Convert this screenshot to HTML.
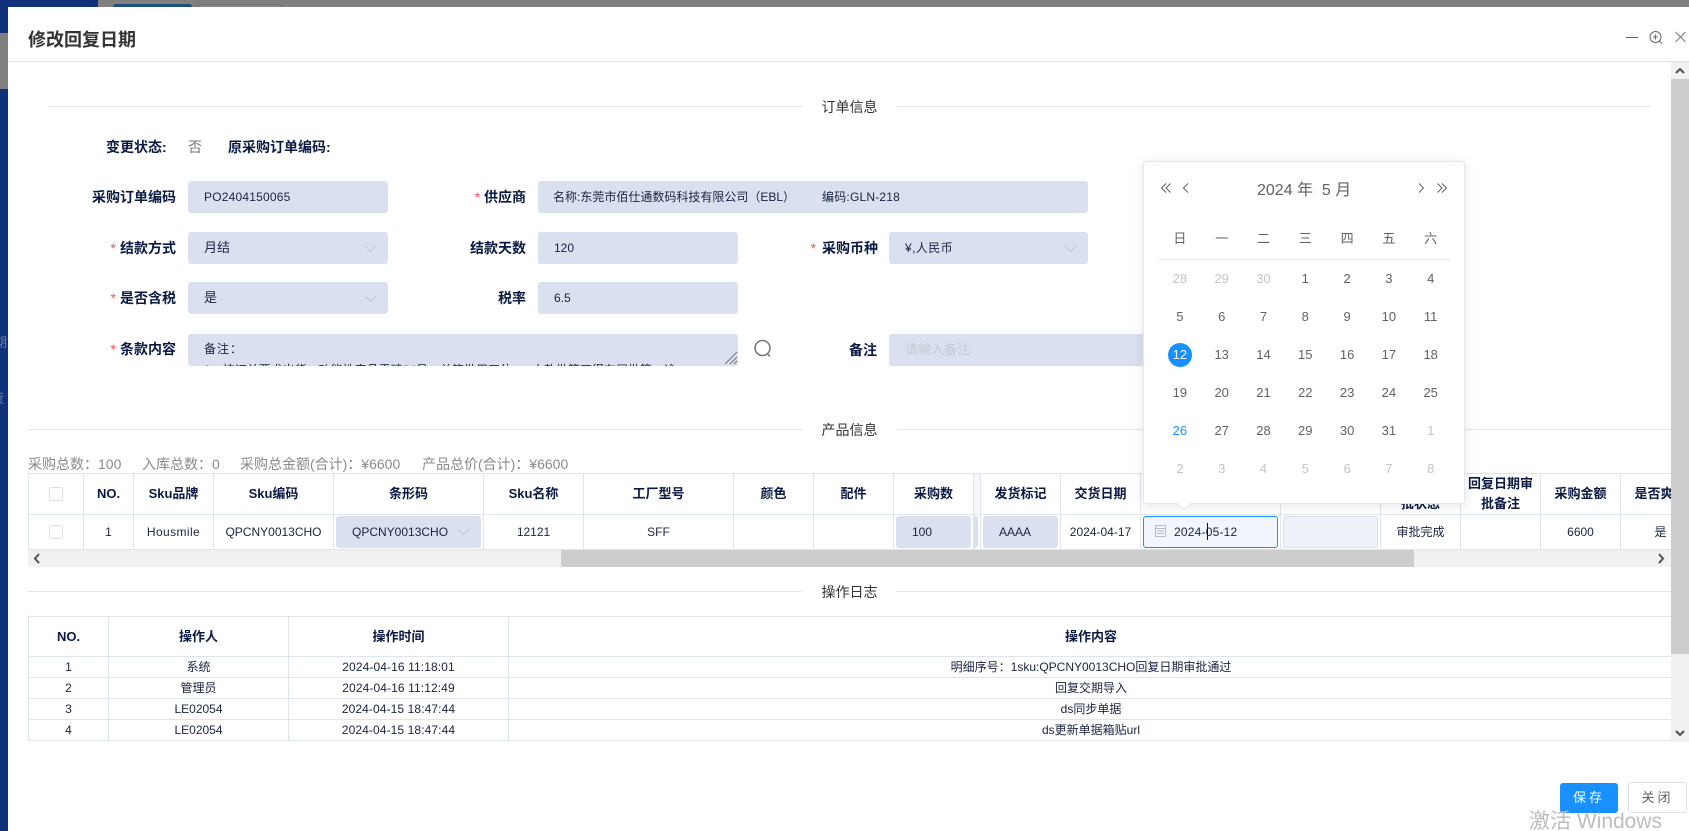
<!DOCTYPE html>
<html><head><meta charset="utf-8"><style>
html,body{margin:0;padding:0;width:1689px;height:831px;overflow:hidden;background:#7f7f7f;}
body{position:relative;font-family:"Liberation Sans","Noto Sans CJK SC",sans-serif;font-size:13px;color:#0b1a44;}
.a{position:absolute;white-space:nowrap;}
.l{position:absolute;white-space:nowrap;font-size:14px;font-weight:bold;line-height:20px;text-align:right;color:#0b1a44;}
.i{position:absolute;background:#dae0ef;border-radius:3px;height:32px;line-height:32px;padding-left:16px;box-sizing:border-box;font-size:13px;color:#1a2340;white-space:nowrap;overflow:hidden;}
.s{color:#ff4d4f;font-weight:normal;margin-right:4px;}
.h{position:absolute;height:1px;background:#dfe4ee;}
.sum{position:absolute;white-space:nowrap;top:454px;font-size:14px;line-height:20px;color:#8a8a8a;}
.sec{position:absolute;left:802px;width:95px;text-align:center;font-size:14px;line-height:20px;color:#333;}
table{border-collapse:collapse;table-layout:fixed;position:absolute;left:0;top:0;}
td,th{border:1px solid #dfe5f0;text-align:center;padding:0;font-size:12px;color:#1a2340;font-weight:normal;box-sizing:border-box;line-height:20px;}
th{font-size:13px;font-weight:bold;color:#0b1a44;}
.cb{position:absolute;width:14px;height:14px;border:1px solid #dcdfe6;border-radius:2px;background:#fff;box-sizing:border-box;}
.cal{position:absolute;left:1143px;top:161px;width:322px;height:343px;background:#fff;border:1px solid #e4e7ed;border-radius:4px;box-shadow:0 2px 12px rgba(0,0,0,.1);box-sizing:border-box;}
.grid{position:absolute;left:15px;display:grid;grid-template-columns:repeat(7,41.8px);grid-auto-rows:38px;text-align:center;font-size:13px;line-height:38px;color:#606266;}
.f{color:#c0c4cc;}
</style></head><body>
<!-- backdrop -->
<div class="a" style="left:0;top:0;width:98px;height:7px;background:#10327a"></div>
<div class="a" style="left:0;top:33px;width:8px;height:56px;background:#808080"></div>
<div class="a" style="left:0;top:0;width:8px;height:33px;background:#10327a"></div>
<div class="a" style="left:0;top:89px;width:8px;height:742px;background:#10327a"></div>
<div class="a" style="left:0;top:335px;width:8px;height:16px;overflow:hidden;color:#6d7fa8;font-size:13px;line-height:16px"><span style="margin-left:-6px">期</span></div>
<div class="a" style="left:0;top:391px;width:8px;height:16px;overflow:hidden;color:#6d7fa8;font-size:13px;line-height:16px"><span style="margin-left:-9px">货</span></div>
<div class="a" style="left:113px;top:4px;width:79px;height:3px;background:#1f4e80;border-radius:3px 3px 0 0"></div>
<div class="a" style="left:197px;top:4px;width:85px;height:3px;background:#858585;border:1px solid #6f6f6f;border-bottom:0;box-sizing:border-box;border-radius:3px 3px 0 0"></div>
<!-- modal -->
<div class="a" style="left:8px;top:7px;width:1681px;height:824px;background:#fff"></div>
<div class="a" style="left:28px;top:28px;font-size:18px;font-weight:bold;line-height:25px;color:#333">修改回复日期</div>
<div class="h" style="left:8px;top:61px;width:1681px;background:#dde4ee"></div>
<svg class="a" style="left:1620px;top:26px" width="69" height="24" fill="none" stroke="#666" stroke-width="1"><path d="M6 11.5h12"/><circle cx="35.5" cy="11" r="5.5"/><path d="M39.5 15l2.5 2.5M33 11h5M35.5 8.5v5"/><path d="M55.5 6l10 10M65.5 6l-10 10" stroke="#777"/></svg>
<!-- vertical scrollbar -->
<div class="a" style="left:1671px;top:62px;width:18px;height:680px;background:#f1f1f1"></div>
<div class="a" style="left:1671px;top:79px;width:18px;height:575px;background:#cdcdcd"></div>
<svg class="a" style="left:1671px;top:62px" width="18" height="17" fill="none" stroke="#505050" stroke-width="2"><path d="M5 11l4-4 4 4"/></svg>
<svg class="a" style="left:1671px;top:725px" width="18" height="17" fill="none" stroke="#505050" stroke-width="2"><path d="M5 6l4 4 4-4"/></svg>
<!-- section 1 -->
<div class="h" style="left:48px;top:106px;width:754px"></div>
<div class="h" style="left:897px;top:106px;width:753px"></div>
<div class="sec" style="top:97px">订单信息</div>
<div class="l" style="left:106px;top:137px">变更状态:</div>
<div class="a" style="left:188px;top:137px;font-size:14px;line-height:20px;color:#777">否</div>
<div class="l" style="left:228px;top:137px">原采购订单编码:</div>
<div class="l" style="right:1513px;top:187px">采购订单编码</div>
<div class="i" style="left:188px;top:181px;width:200px;letter-spacing:.2px;font-size:12px">PO2404150065</div>
<div class="l" style="right:1163px;top:187px"><span class="s">*</span>供应商</div>
<div class="i" style="left:538px;top:181px;width:550px;font-size:12px;padding-left:15px">名称:东莞市佰仕通数码科技有限公司（EBL）<span style="margin-left:27px;letter-spacing:.2px">编码:GLN-218</span></div>
<div class="l" style="right:1513px;top:238px"><span class="s">*</span>结款方式</div>
<div class="i" style="left:188px;top:232px;width:200px">月结</div>
<svg class="a" style="left:364px;top:245px" width="13" height="8" fill="none" stroke="#c0c6d4"><path d="M1 1l5.500 5.500L12 1"/></svg>
<div class="l" style="right:1163px;top:238px">结款天数</div>
<div class="i" style="left:538px;top:232px;width:200px;font-size:12px">120</div>
<div class="l" style="right:811px;top:238px"><span class="s" style="margin-right:6px">*</span>采购币种</div>
<div class="i" style="left:889px;top:232px;width:199px;font-size:12px;letter-spacing:.4px">¥,人民币</div>
<svg class="a" style="left:1064px;top:245px" width="13" height="8" fill="none" stroke="#c0c6d4"><path d="M1 1l5.500 5.500L12 1"/></svg>
<div class="l" style="right:1513px;top:288px"><span class="s">*</span>是否含税</div>
<div class="i" style="left:188px;top:282px;width:200px">是</div>
<svg class="a" style="left:364px;top:295px" width="13" height="8" fill="none" stroke="#c0c6d4"><path d="M1 1l5.500 5.500L12 1"/></svg>
<div class="l" style="right:1163px;top:288px">税率</div>
<div class="i" style="left:538px;top:282px;width:200px;font-size:12px">6.5</div>
<div class="l" style="right:1513px;top:339px"><span class="s">*</span>条款内容</div>
<div class="i" style="left:188px;top:334px;width:550px;height:32px;font-size:12px;line-height:21px;padding-top:5px;white-space:normal"><span style="letter-spacing:1px">备注：</span><br>1、按订单要求出货，功能性产品需晴24号，单笔批用工位......方款批算工得在展批等，逾</div>
<svg class="a" style="left:724px;top:350px" width="14" height="16" fill="none" stroke="#777"><path d="M1 14L13 2M6 14l7-7M10 14l3-3"/></svg>
<svg class="a" style="left:753px;top:339px" width="20" height="20" fill="none" stroke="#777" stroke-width="1.500"><circle cx="9.500" cy="9" r="7.500"/><path d="M14.500 15l2.500 2.500"/></svg>
<div class="l" style="left:849px;top:340px">备注</div>
<div class="i" style="left:889px;top:334px;width:300px;color:#c6cad6;font-size:13px">请输入备注</div>
<!-- section 2 -->
<div class="h" style="left:28px;top:429px;width:774px"></div>
<div class="h" style="left:897px;top:429px;width:774px"></div>
<div class="sec" style="top:420px">产品信息</div>
<div class="sum" style="left:28px">采购总数：100</div>
<div class="sum" style="left:142px">入库总数：0</div>
<div class="sum" style="left:240px">采购总金额(合计)：¥6600</div>
<div class="sum" style="left:422px">产品总价(合计)：¥6600</div>
<div class="a" style="left:28px;top:473px;width:1643px;height:77px;overflow:hidden">
<table style="width:1672px"><colgroup><col style="width:55px"><col style="width:50px"><col style="width:80px"><col style="width:120px"><col style="width:150px"><col style="width:100px"><col style="width:150px"><col style="width:80px"><col style="width:80px"><col style="width:80px"><col style="width:7px"><col style="width:80px"><col style="width:80px"><col style="width:140px"><col style="width:100px"><col style="width:80px"><col style="width:80px"><col style="width:80px"><col style="width:80px"></colgroup>
<tr style="height:41px"><th></th><th>NO.</th><th>Sku品牌</th><th>Sku编码</th><th>条形码</th><th>Sku名称</th><th>工厂型号</th><th>颜色</th><th>配件</th><th>采购数</th><th style="background:#f6f7fa"></th><th>发货标记</th><th>交货日期</th><th>回复日期</th><th></th><th>回复日期审<br>批状态</th><th>回复日期审<br>批备注</th><th>采购金额</th><th>是否爽约</th></tr>
<tr style="height:35px"><td></td><td>1</td><td style="letter-spacing:.4px">Housmile</td><td>QPCNY0013CHO</td><td></td><td>12121</td><td>SFF</td><td></td><td></td><td></td><td></td><td></td><td>2024-04-17</td><td></td><td></td><td>审批完成</td><td></td><td>6600</td><td>是</td></tr>
</table></div>
<div class="cb" style="left:49px;top:487px"></div>
<div class="cb" style="left:49px;top:525px"></div>
<div class="i" style="left:336px;top:516px;width:145px;font-size:12px">QPCNY0013CHO</div>
<svg class="a" style="left:457px;top:528px" width="13" height="8" fill="none" stroke="#c0c6d4"><path d="M1 1l5.500 5.500L12 1"/></svg>
<div class="i" style="left:896px;top:516px;width:75px;font-size:12px">100</div>
<div class="a" style="left:973px;top:516px;width:5px;height:32px;background:#dae0ef;border-radius:0 3px 3px 0"></div>
<div class="i" style="left:983px;top:516px;width:75px;font-size:12px">AAAA</div>
<!-- h scroll -->
<div class="a" style="left:28px;top:550px;width:1643px;height:17px;background:#f1f1f1"></div>
<div class="a" style="left:561px;top:550px;width:853px;height:17px;background:#cdcdcd"></div>
<svg class="a" style="left:29px;top:550px" width="17" height="17" fill="none" stroke="#505050" stroke-width="2"><path d="M10 4l-4 4.500 4 4.500"/></svg>
<svg class="a" style="left:1652px;top:550px" width="17" height="17" fill="none" stroke="#505050" stroke-width="2"><path d="M7 4l4 4.500-4 4.500"/></svg>
<!-- section 3 -->
<div class="h" style="left:28px;top:591px;width:774px"></div>
<div class="h" style="left:897px;top:591px;width:774px"></div>
<div class="sec" style="top:582px">操作日志</div>
<div class="a" style="left:28px;top:616px;width:1643px;height:126px;overflow:hidden">
<table style="width:1645px"><colgroup><col style="width:80px"><col style="width:180px"><col style="width:220px"><col style="width:1165px"></colgroup>
<tr style="height:40px"><th>NO.</th><th>操作人</th><th>操作时间</th><th>操作内容</th></tr>
<tr style="height:21px"><td>1</td><td>系统</td><td style="letter-spacing:.1px">2024-04-16 11:18:01</td><td>明细序号：1sku:QPCNY0013CHO回复日期审批通过</td></tr>
<tr style="height:21px"><td>2</td><td>管理员</td><td style="letter-spacing:.1px">2024-04-16 11:12:49</td><td>回复交期导入</td></tr>
<tr style="height:21px"><td>3</td><td>LE02054</td><td style="letter-spacing:.1px">2024-04-15 18:47:44</td><td>ds同步单据</td></tr>
<tr style="height:21px"><td>4</td><td>LE02054</td><td style="letter-spacing:.1px">2024-04-15 18:47:44</td><td>ds更新单据箱贴url</td></tr>
</table></div>
<!-- date inputs -->
<div class="a" style="left:1143px;top:516px;width:135px;height:32px;background:#f2f5fb;border:1px solid #1890ff;border-radius:3px;box-sizing:border-box"></div>
<svg class="a" style="left:1154px;top:524px" width="13" height="14" fill="none" stroke="#b8bcc6"><rect x="1.500" y="1.500" width="10" height="11"/><path d="M1.500 4.500h10M3 7h7M3 9.500h7"/></svg>
<div class="a" style="left:1174px;top:522px;font-size:12px;line-height:20px;color:#1a2340;letter-spacing:.2px">2024-05-12</div>
<div class="a" style="left:1207px;top:523px;width:1px;height:17px;background:#111"></div>
<div class="a" style="left:1283px;top:516px;width:95px;height:32px;background:#eef1f8;border:1px solid #d8deec;border-radius:3px;box-sizing:border-box"></div>
<!-- calendar -->
<div class="cal">
<svg class="a" style="left:16px;top:19px" width="12" height="14" fill="none" stroke="#606266"><path d="M6 2.500L1.500 7 6 11.500M10.500 2.500L6 7l4.500 4.500"/></svg>
<svg class="a" style="left:37px;top:19px" width="10" height="14" fill="none" stroke="#606266"><path d="M7 2.500L2.500 7 7 11.500"/></svg>
<div class="a" style="left:113px;top:18px;font-size:16px;line-height:22px;color:#606266">2024 年&nbsp; 5 月</div>
<svg class="a" style="left:272px;top:19px" width="10" height="14" fill="none" stroke="#606266"><path d="M3 2.500L7.500 7 3 11.500"/></svg>
<svg class="a" style="left:292px;top:19px" width="12" height="14" fill="none" stroke="#606266"><path d="M1.500 2.500L6 7l-4.500 4.500M6 2.500L10.500 7 6 11.500"/></svg>
<div class="grid" style="top:58px;grid-auto-rows:38px;font-size:13px"><span>日</span><span>一</span><span>二</span><span>三</span><span>四</span><span>五</span><span>六</span></div>
<div class="h" style="left:15px;top:97px;width:292px;background:#e4e7ed"></div>
<div class="a" style="left:24px;top:181px;width:24px;height:24px;border-radius:50%;background:#1890ff"></div>
<div class="grid" style="top:98px">
<span class="f">28</span><span class="f">29</span><span class="f">30</span><span>1</span><span>2</span><span>3</span><span>4</span>
<span>5</span><span>6</span><span>7</span><span>8</span><span>9</span><span>10</span><span>11</span>
<span style="color:#fff">12</span><span>13</span><span>14</span><span>15</span><span>16</span><span>17</span><span>18</span>
<span>19</span><span>20</span><span>21</span><span>22</span><span>23</span><span>24</span><span>25</span>
<span style="color:#1890ff">26</span><span>27</span><span>28</span><span>29</span><span>30</span><span>31</span><span class="f">1</span>
<span class="f">2</span><span class="f">3</span><span class="f">4</span><span class="f">5</span><span class="f">6</span><span class="f">7</span><span class="f">8</span>
</div>
</div>
<div class="a" style="left:1179px;top:499px;width:10px;height:10px;background:#fff;transform:rotate(45deg);border-right:1px solid #e4e7ed;border-bottom:1px solid #e4e7ed;box-sizing:border-box"></div>
<!-- buttons -->
<div class="a" style="left:1560px;top:783px;width:58px;height:30px;background:#1890ff;border-radius:3px;color:#fff;text-align:center;line-height:30px;font-size:13px;letter-spacing:3px">保存</div>
<div class="a" style="left:1628px;top:782px;width:59px;height:31px;background:#fff;border:1px solid #dcdfe6;border-radius:3px;box-sizing:border-box;color:#606266;text-align:center;line-height:29px;font-size:13px;letter-spacing:3px">关闭</div>
<div class="a" style="left:1529px;top:808px;font-size:21px;line-height:28px;color:#bdbdbd">激活 Windows</div>
</body></html>
